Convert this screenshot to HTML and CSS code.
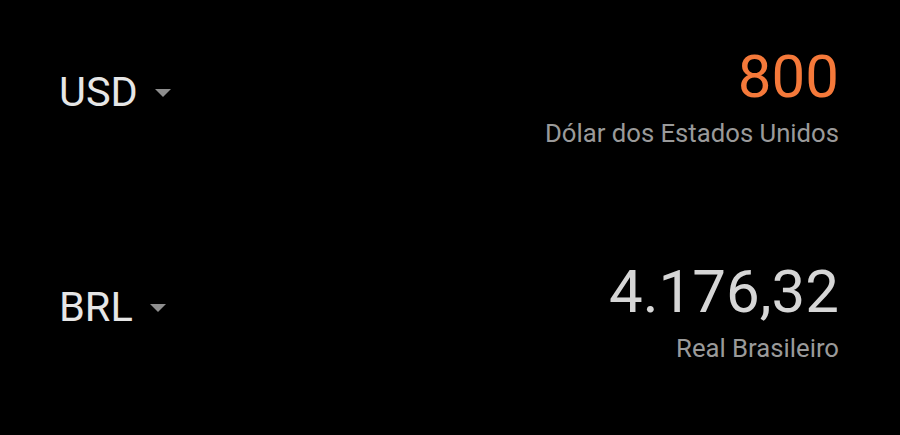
FILE: index.html
```html
<!DOCTYPE html>
<html lang="pt-BR">
<head>
<meta charset="utf-8">
<link rel="stylesheet" href="styles.css">
</head>
<body>
<main class="converter">
  <section class="row">
    <div class="code">
      <span class="code-text">USD</span>
      <svg class="caret" viewBox="0 0 16 8" width="16" height="8"><path d="M0 0 L16 0 L8 8 Z" fill="#8e8e8e"/></svg>
    </div>
    <div class="value">
      <div class="amount amount-active">800</div>
      <div class="name">Dólar dos Estados Unidos</div>
    </div>
  </section>
  <section class="row">
    <div class="code">
      <span class="code-text">BRL</span>
      <svg class="caret" viewBox="0 0 16 8" width="16" height="8"><path d="M0 0 L16 0 L8 8 Z" fill="#8e8e8e"/></svg>
    </div>
    <div class="value">
      <div class="amount">4.176,32</div>
      <div class="name">Real Brasileiro</div>
    </div>
  </section>
</main>
</body>
</html>
```
FILE: styles.css
```css
html, body {
  margin: 0;
  padding: 0;
  background: #000;
}
body {
  width: 900px;
  height: 435px;
  overflow: hidden;
  font-family: Roboto, "Noto Sans", sans-serif;
}
.converter {
  display: flex;
  flex-direction: column;
  gap: 114px;
  padding: 47px 61px 0 59px;
}
.row {
  display: flex;
  justify-content: space-between;
  align-items: flex-start;
}
.code {
  display: flex;
  align-items: center;
  gap: 17px;
  margin-top: 24px;
}
.code-text {
  font-size: 41.5px;
  line-height: 41px;
  color: #e6e6e6;
}
.caret {
  display: block;
  margin-top: 2px;
}
.value {
  display: flex;
  flex-direction: column;
  align-items: flex-end;
  gap: 11px;
}
.amount {
  font-size: 60px;
  line-height: 60px;
  color: #d6d6d6;
}
.amount-active {
  color: #f5793a;
}
.name {
  font-size: 25.7px;
  line-height: 30px;
  color: #9a9a9a;
}
```
